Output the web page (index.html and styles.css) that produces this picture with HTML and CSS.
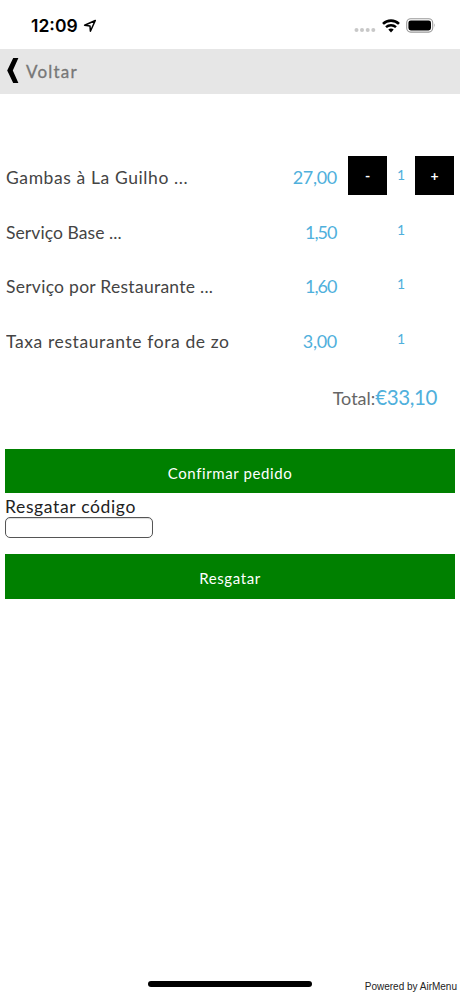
FILE: index.html
```
<!DOCTYPE html>
<html lang="pt">
<head>
    <meta charset="UTF-8">
    <meta name="viewport" content="width=device-width, initial-scale=1.0">
    <title>AirMenu - Pedido</title>
    <link rel="stylesheet" href="styles.css">
</head>
<body>
    <div class="status-bar">
        <span class="clock">12:09</span>
        <svg class="location" width="14" height="14" viewBox="0 0 14 14">
            <path d="M12.3 1.5 L1.6 6.2 L7 7 L7.4 12.2 Z" fill="none" stroke="#000" stroke-width="1.5" stroke-linejoin="round"/>
        </svg>
        <div class="status-icons">
            <svg width="22" height="6" viewBox="0 0 22 6" fill="#c8c8c8">
                <circle cx="2.5" cy="3" r="2"/>
                <circle cx="8" cy="3" r="2"/>
                <circle cx="13.7" cy="3" r="2"/>
                <circle cx="19.3" cy="3" r="2"/>
            </svg>
            <svg class="wifi" width="18" height="14" viewBox="0 0 18 14">
                <path d="M1 4.9 A11.5 11.5 0 0 1 17 4.9" fill="none" stroke="#000" stroke-width="2.6"/>
                <path d="M4 8.2 A7.2 7.2 0 0 1 14 8.2" fill="none" stroke="#000" stroke-width="2.4"/>
                <path d="M6.3 10.6 A3.7 3.7 0 0 1 11.7 10.6 L9 13.4 Z" fill="#000"/>
            </svg>
            <svg class="battery" width="30" height="15" viewBox="0 0 30 15">
                <rect x="0.7" y="0.7" width="26" height="13.4" rx="4" fill="none" stroke="#999" stroke-width="1.1"/>
                <rect x="2.4" y="2.4" width="22.6" height="10" rx="2.4" fill="#000"/>
                <path d="M28 5.2 Q29.6 7.4 28 9.6 Z" fill="#999"/>
            </svg>
        </div>
    </div>

    <div class="header">
        <svg width="12" height="25" viewBox="0 0 12 25">
            <path d="M6.2 0 H11.4 L5.8 12.5 L11.4 25 H6.2 L0.2 12.5 Z" fill="#000"/>
        </svg>
        <span class="back">Voltar</span>
    </div>

    <div class="order">
        <div class="item">
            <span class="name wide">Gambas à La Guilho ...</span>
            <span class="price">27,00</span>
            <button class="qty-btn">-</button>
            <span class="qty">1</span>
            <button class="qty-btn">+</button>
        </div>
        <div class="item">
            <span class="name">Serviço Base ...</span>
            <span class="price narrow">1,50</span>
            <span class="qty">1</span>
        </div>
        <div class="item">
            <span class="name medium">Serviço por Restaurante ...</span>
            <span class="price narrow">1,60</span>
            <span class="qty">1</span>
        </div>
        <div class="item">
            <span class="name wide">Taxa restaurante fora de zona</span>
            <span class="price">3,00</span>
            <span class="qty">1</span>
        </div>
    </div>

    <div class="total">
        <span class="total-label">Total:</span><span class="total-value">€33,10</span>
    </div>

    <div class="actions">
        <button class="main-btn">Confirmar pedido</button>
        <label class="code-label" for="code">Resgatar código</label>
        <input class="code-input" type="text" id="code">
        <button class="main-btn">Resgatar</button>
    </div>

    <div class="footer">
        <div class="home-bar"></div>
        <span class="powered">Powered by AirMenu</span>
    </div>
</body>
</html>
```
FILE: styles.css
```
* {
    box-sizing: border-box;
}
body {
    margin: 0;
    height: 996px;
    display: flex;
    flex-direction: column;
    overflow: hidden;
    background-color: #fff;
    font-family: Lato, sans-serif;
    color: #444;
}
button {
    border: none;
    border-radius: 0;
    padding: 0;
    font-family: inherit;
    color: white;
}
.status-bar {
    height: 49px;
    flex: none;
    display: flex;
    align-items: center;
    padding: 2px 24px 0 31px;
}
.clock {
    font-family: Inter, sans-serif;
    font-size: 17.5px;
    font-weight: 600;
    color: #000;
}
.location {
    margin-left: 5px;
}
.status-icons {
    margin-left: auto;
    display: flex;
    align-items: center;
}
.status-icons svg:first-child {
    margin-top: 8px;
}
.wifi {
    margin-left: 6px;
}
.battery {
    margin-left: 6px;
}
.header {
    height: 45px;
    flex: none;
    display: flex;
    align-items: center;
    padding: 0 7px 3px;
    background-color: #e6e6e6;
}
.back {
    margin: 3px 0 0 7px;
    font-size: 17px;
    letter-spacing: 1.2px;
    color: #777;
    -webkit-text-stroke: 0.3px #777;
}
.order {
    margin-top: 62px;
    padding: 0 6px;
}
.item {
    display: grid;
    grid-template-columns: 224px 107px 11px 39px 28px 39px;
    height: 54.5px;
    line-height: 43px;
}
.name {
    font-size: 17.5px;
    letter-spacing: 0.08px;
    overflow: hidden;
    white-space: nowrap;
}
.name.medium {
    letter-spacing: 0.27px;
}
.name.wide {
    letter-spacing: 0.6px;
}
.price {
    font-size: 18px;
    letter-spacing: -0.3px;
    text-align: right;
    color: #4fb0dc;
}
.price.narrow {
    letter-spacing: -1px;
    padding-right: 0.5px;
}
.qty {
    grid-column: 5;
    font-size: 14px;
    line-height: 37px;
    text-align: center;
    color: #4fb0dc;
}
.qty-btn {
    width: 39px;
    height: 39px;
    background-color: #000;
    font-size: 14px;
    font-weight: bold;
}
.qty-btn:nth-of-type(1) {
    grid-column: 4;
}
.total {
    display: flex;
    justify-content: flex-end;
    align-items: baseline;
    height: 74.5px;
    line-height: 46px;
    padding-right: 23px;
}
.total-label {
    font-size: 18px;
    color: #666;
}
.total-value {
    font-size: 20.5px;
    letter-spacing: -0.4px;
    color: #4fb0dc;
}
.actions {
    display: flex;
    flex-direction: column;
    align-items: flex-start;
    padding: 0 5px;
}
.main-btn {
    width: 100%;
    height: 44.5px;
    padding-top: 4px;
    background-color: green;
    font-size: 15px;
    letter-spacing: 0.6px;
}
.code-label {
    height: 23.5px;
    line-height: 28px;
    font-size: 17.5px;
    letter-spacing: 0.65px;
    color: #222;
}
.code-input {
    width: 148px;
    height: 21.5px;
    margin-bottom: 16px;
    border: 1px solid #555;
    border-radius: 5px;
    background-color: #fff;
    box-shadow: inset 0 1px 1px #ddd;
}
.footer {
    height: 20px;
    margin-top: auto;
    display: grid;
    grid-template-columns: 148px 164px 1fr;
    padding-right: 3px;
}
.home-bar {
    grid-column: 2;
    height: 6px;
    margin-top: 5px;
    border-radius: 3px;
    background-color: #000;
}
.powered {
    font-family: "Liberation Sans", Arial, sans-serif;
    font-size: 10px;
    line-height: 21px;
    text-align: right;
    white-space: nowrap;
    color: #222;
}
```
